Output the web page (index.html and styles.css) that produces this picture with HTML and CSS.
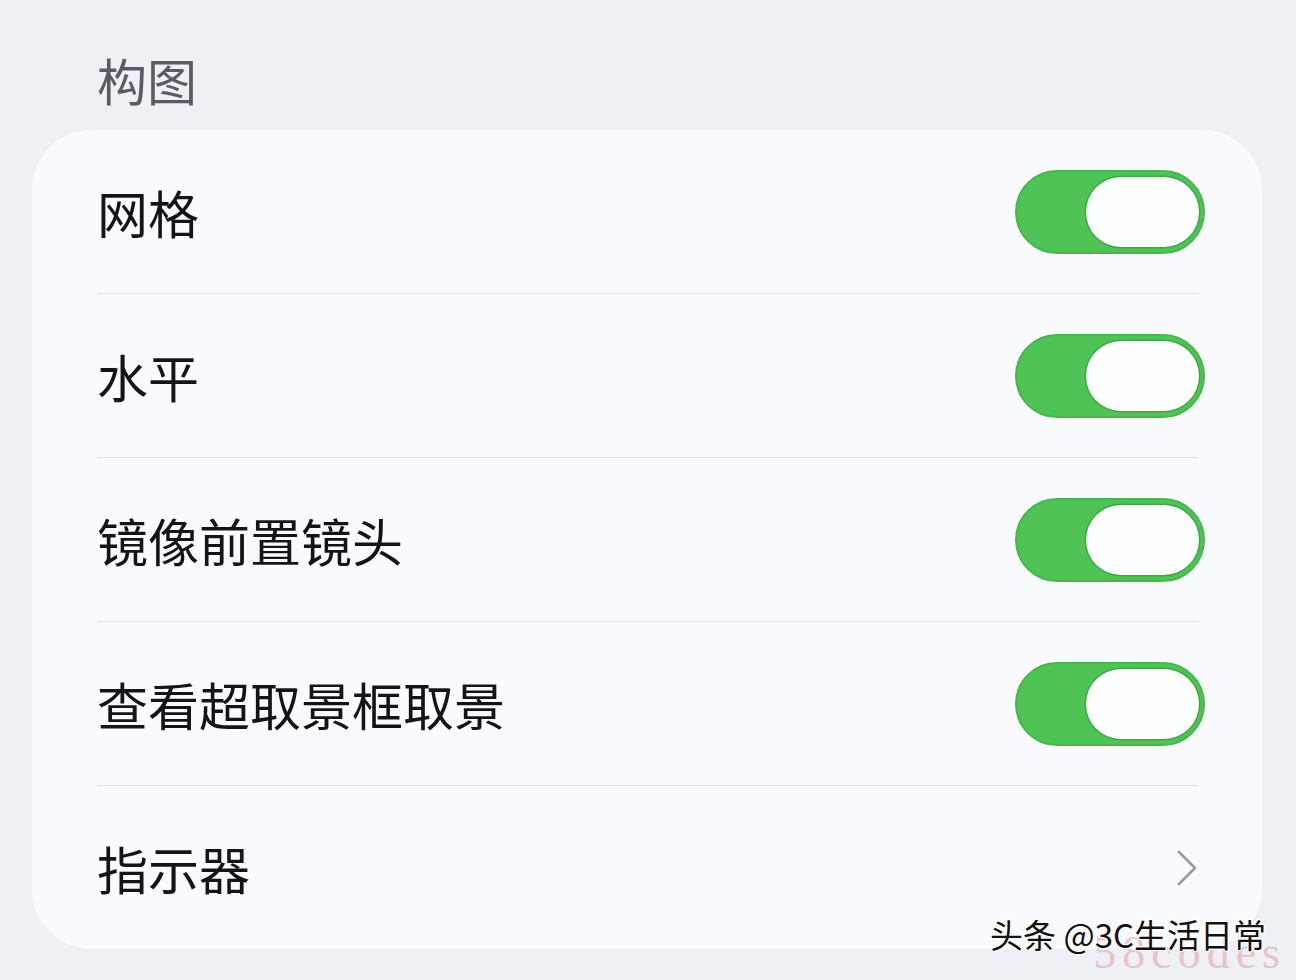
FILE: index.html
```html
<!DOCTYPE html>
<html lang="zh-CN">
<head>
<meta charset="utf-8">
<title>构图</title>
<link rel="stylesheet" href="styles.css">
</head>
<body>
<div class="page">
  <div class="section-title">构图</div>
  <div class="card">
    <div class="row">
      <span class="label">网格</span>
      <span class="toggle"><span class="thumb"></span></span>
    </div>
    <div class="sep"></div>
    <div class="row">
      <span class="label">水平</span>
      <span class="toggle"><span class="thumb"></span></span>
    </div>
    <div class="sep"></div>
    <div class="row">
      <span class="label">镜像前置镜头</span>
      <span class="toggle"><span class="thumb"></span></span>
    </div>
    <div class="sep"></div>
    <div class="row">
      <span class="label">查看超取景框取景</span>
      <span class="toggle"><span class="thumb"></span></span>
    </div>
    <div class="sep"></div>
    <div class="row">
      <span class="label">指示器</span>
      <svg class="chevron" width="22" height="38" viewBox="0 0 22 38"><path d="M3 3 L19 19 L3 35" fill="none" stroke="#9a9aa0" stroke-width="2.6" stroke-linecap="round" stroke-linejoin="round"/></svg>
    </div>
  </div>
  <div class="watermark">
    <span class="wm-pink">58codes</span>
    <span class="wm-text">头条 @3C生活日常</span>
  </div>
</div>
</body>
</html>
```

FILE: styles.css
```css
html, body {
  margin: 0;
  padding: 0;
  background: #eef0f6;
}
.page {
  position: relative;
  width: 1296px;
  height: 980px;
  overflow: hidden;
  font-family: "Noto Sans CJK SC", "Noto Sans", sans-serif;
}
.section-title {
  padding-top: 28px;
  padding-left: 97px;
  box-sizing: border-box;
  height: 130px;
  display: flex;
  align-items: center;
  font-size: 50px;
  color: #5c5b63;
}
.card {
  margin-left: 32px;
  width: 1230px;
  background: #f9fafd;
  border-radius: 60px;
  display: flex;
  flex-direction: column;
}
.row {
  height: 163px;
  display: flex;
  align-items: center;
  justify-content: space-between;
  padding-left: 65px;
  padding-right: 57px;
}
.label {
  font-size: 51px;
  color: #141418;
}
.sep {
  height: 1px;
  background: #dde2ea;
  margin-left: 65px;
  margin-right: 64px;
}
.toggle {
  width: 190px;
  height: 84px;
  box-sizing: border-box;
  border-radius: 42px;
  background: #4fc355;
  border: 2px solid #47b74e;
  display: flex;
  align-items: center;
  justify-content: flex-end;
  padding-right: 4px;
}
.thumb {
  width: 113px;
  height: 70px;
  border-radius: 35px;
  background: #fdfefe;
  box-shadow: 0 0 0 1.5px #3fa846;
}
.chevron {
  margin-right: 7px;
}
.watermark {
  position: absolute;
  right: 0;
  bottom: 0;
  width: 400px;
  height: 80px;
}
.wm-pink {
  position: absolute;
  right: 10px;
  top: 30px;
  line-height: 1;
  font-family: "Liberation Serif", serif;
  font-size: 46px;
  letter-spacing: 6px;
  color: rgba(226, 150, 162, 0.5);
}
.wm-text {
  position: absolute;
  right: 30px;
  top: 10px;
  line-height: 48px;
  font-size: 33px;
  color: #111;
  white-space: nowrap;
  text-shadow: 1px 1px 0 #fff, -1px -1px 0 #fff, 1px -1px 0 #fff, -1px 1px 0 #fff;
}
```
